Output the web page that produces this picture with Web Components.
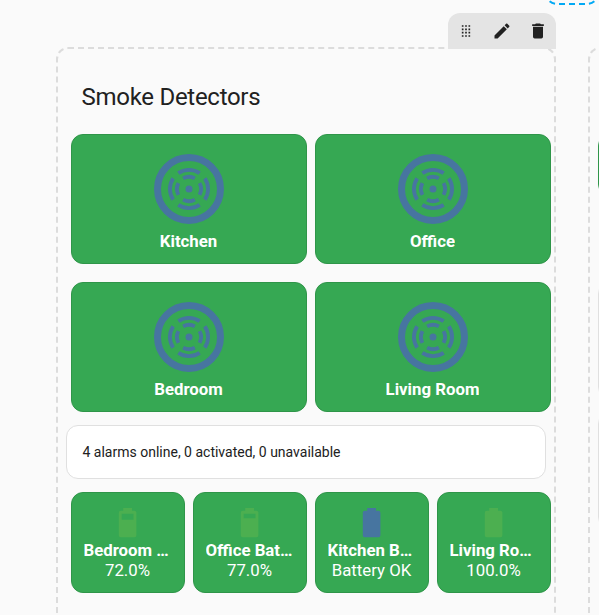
<!DOCTYPE html>
<html lang="en">
<head>
<meta charset="utf-8">
<title>Smoke Detectors</title>
<style>
html,body{margin:0;height:615px;overflow:hidden;background:#fafafa}
body{font-family:Roboto,"Noto Sans",sans-serif;color:#212121}
</style>
</head>
<body>
<dash-view></dash-view>
<script>
const define = (name, html, setup) => customElements.define(name, class extends HTMLElement {
  connectedCallback() {
    if (this.shadowRoot) return;
    const root = this.attachShadow({mode: 'open'});
    const t = document.createElement('template');
    t.innerHTML = html;
    const content = t.content.cloneNode(true);
    if (setup) setup(this, content);
    root.append(content);
  }
});

const tail = 'M16.67,4H15V2H9V4H7.33A1.33,1.33 0 0,0 6,5.33V20.67C6,21.4 6.6,22 7.33,22H16.67A1.33,1.33 0 0,0 18,20.67V5.33C18,4.6 17.4,4 16.67,4Z';
const dots = [6, 10, 14, 18].map(y => [8, 12, 16].map(x => `M${x-1},${y-1}h2v2h-2Z`).join('')).join('');
const arc = (r, deg) => [0, 90, 180, 270].map(a => {
  const p = d => { const t = (a + d) * Math.PI / 180; return `${(12 + r * Math.cos(t)).toFixed(3)},${(12 + r * Math.sin(t)).toFixed(3)}`; };
  return `M${p(-deg)}A${r},${r} 0 0,1 ${p(deg)}`;
}).join('');
const icons = {
  drag: `<path d="${dots}"/>`,
  pencil: '<path d="M20.71,7.04C21.1,6.65 21.1,6 20.71,5.63L18.37,3.29C18,2.9 17.35,2.9 16.96,3.29L15.12,5.12L18.87,8.87M3,17.25V21H6.75L17.81,9.93L14.06,6.18L3,17.25Z"/>',
  trash: '<path d="M19,4H15.5L14.5,3H9.5L8.5,4H5V6H19M6,19A2,2 0 0,0 8,21H16A2,2 0 0,0 18,19V7H6V19Z"/>',
  battery: `<path d="${tail}"/>`,
  battery70: `<path fill-rule="evenodd" d="M16,10H8V6H16Z${tail}"/>`,
  battery80: `<path fill-rule="evenodd" d="M16,9H8V6H16Z${tail}"/>`,
  smoke: `<circle cx="12" cy="12" r="1"/><g fill="none" stroke="currentColor"><circle cx="12" cy="12" r="9" stroke-width="2"/><path stroke-width="1.1" d="${arc(5.45, 34)}${arc(3.45, 29)}"/></g>`
};
define('mdi-icon', '<style>:host{display:block;flex:none;width:var(--size,20px);height:var(--size,20px)}svg{display:block;width:100%;height:100%;fill:currentColor}</style><svg viewBox="0 0 24 24"></svg>',
  (el, content) => { content.querySelector('svg').innerHTML = icons[el.getAttribute('name')]; });

define('edit-bar', `<style>
:host{display:flex;width:108px;height:36px;background:#e4e4e4;border-radius:12px 12px 0 0}
mdi-icon{padding:8px}
</style><mdi-icon name="drag"></mdi-icon><mdi-icon name="pencil"></mdi-icon><mdi-icon name="trash"></mdi-icon>`);

define('button-card', `<style>
:host{display:flex;flex-direction:column;align-items:center;box-sizing:border-box;min-width:0;height:130px;padding:12px 1px 0 0;background:#36a853;border:1px solid #2f9549;border-radius:12px;color:#fff;font-size:16.8px;line-height:20px;overflow:hidden}
mdi-icon{--size:84px;color:#4775a0;margin-right:-1px}
.name{font-weight:700;max-width:100%;white-space:nowrap;overflow:hidden;text-overflow:ellipsis}
:host([small]){height:101px;padding:12px 12.5px 0 11.5px}
:host([small]) mdi-icon{--size:35.2px;color:var(--tint,#4caf50)}
</style><mdi-icon></mdi-icon><div class="name"><slot></slot></div><slot name="state"></slot>`,
  (el, content) => content.querySelector('mdi-icon').setAttribute('name', el.getAttribute('icon') || 'smoke'));

define('text-card', `<style>
:host{display:flex;align-items:center;box-sizing:border-box;background:#fff;border:1px solid #e0e0e0;border-radius:12px;font-size:14px;line-height:20px;padding:0 15.5px}
</style><slot></slot>`);

define('dashed-section', `<style>
:host{display:block;position:relative;box-sizing:border-box;flex:none;width:500px;height:700px;border:2px dashed #dcdcdc;border-radius:12px}
</style><slot></slot>`);

define('dash-view', `<style>
:host{display:block;position:relative;width:599px;height:615px;overflow:hidden}
.columns{display:flex;gap:32px;padding:47px 0 0 56px}
edit-bar{position:absolute;right:-2px;top:-36px}
.add{position:absolute;right:0;top:0;width:55px;height:6px;fill:none;stroke:#03a9f4;stroke-width:2;stroke-dasharray:3 4 6 4 6 40}
h2{margin:0;padding:32px 23.6px 0;font-size:24px;font-weight:400;line-height:32px;letter-spacing:-.012em}
.large{display:grid;grid-template-columns:236px 236px;gap:18px 8px;margin:21px 0 0 13px}
text-card{width:480px;height:54px;margin:13px 0 13px 8px}
.small{display:grid;grid-template-columns:repeat(4,114px);gap:8px;margin-left:13px}
.next{display:flex;flex-direction:column;padding:85px 8px 0}
.next button-card{height:62px;padding:0;margin-bottom:86px}
.next text-card{width:480px;height:117px;margin:0 0 13px}
</style>
<svg class="add" viewBox="544 0 55 6"><path d="M572,4H587A11,11 0 0 0 598,-7"/><path d="M572,4H557A11,11 0 0 1 546,-7"/></svg>
<div class="columns">
<dashed-section>
<edit-bar></edit-bar>
<h2>Smoke Detectors</h2>
<div class="large">
<button-card>Kitchen</button-card><button-card>Office</button-card>
<button-card>Bedroom</button-card><button-card>Living Room</button-card>
</div>
<text-card>4 alarms online, 0 activated, 0 unavailable</text-card>
<div class="small">
<button-card small icon="battery70">Bedroom Battery<span slot="state">72.0%</span></button-card>
<button-card small icon="battery80">Office Battery<span slot="state">77.0%</span></button-card>
<button-card small icon="battery" style="--tint:#4775a0">Kitchen Battery<span slot="state">Battery OK</span></button-card>
<button-card small icon="battery">Living Room Battery<span slot="state">100.0%</span></button-card>
</div>
</dashed-section>
<dashed-section><div class="next">
<button-card></button-card><text-card></text-card><text-card></text-card>
</div></dashed-section>
</div>`);
</script>
</body>
</html>
